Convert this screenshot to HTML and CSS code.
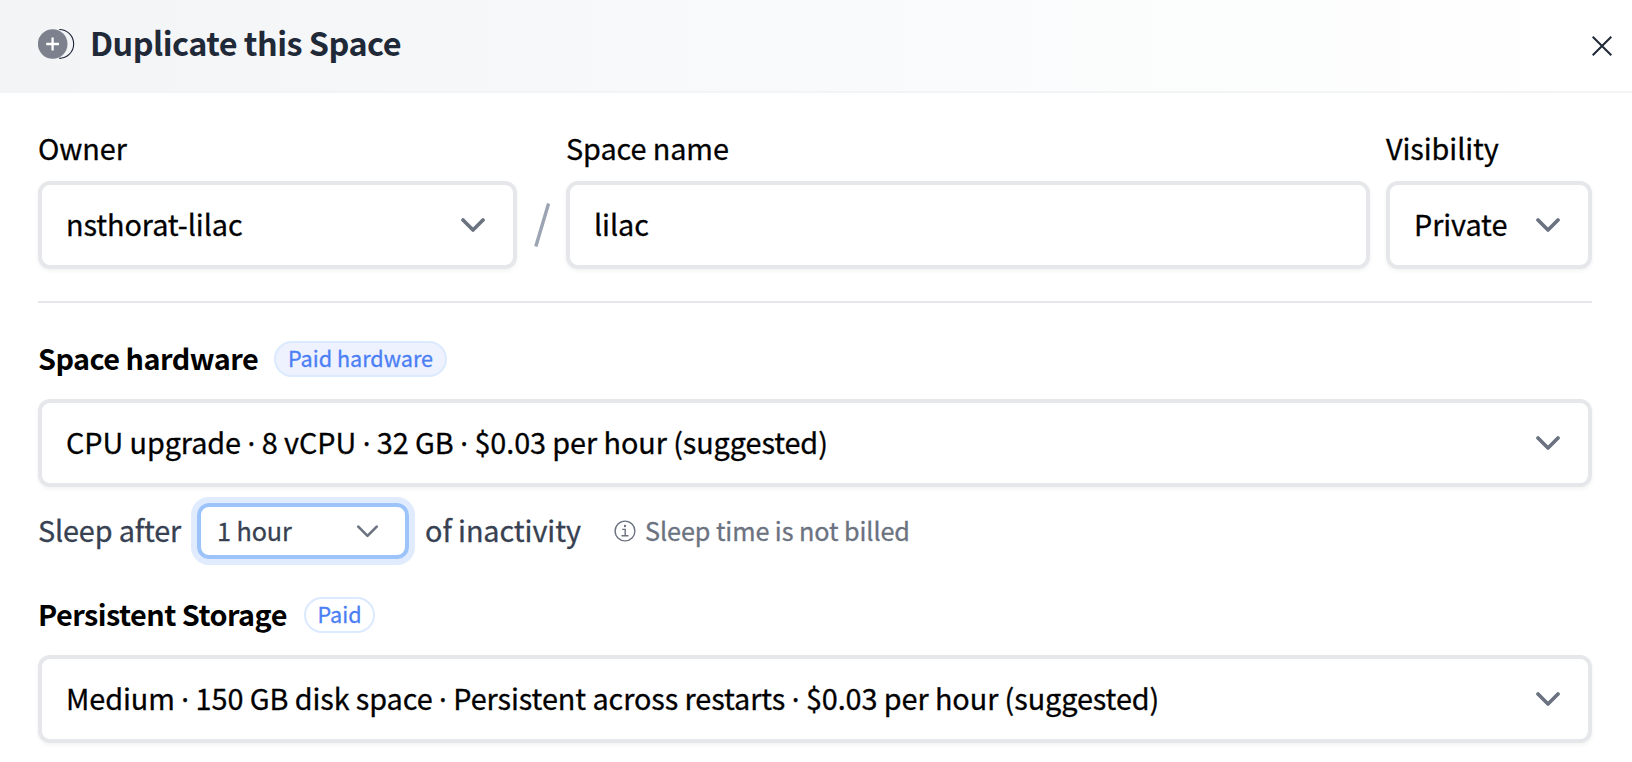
FILE: index.html
```html
<!DOCTYPE html>
<html lang="en">
<head>
<meta charset="utf-8">
<title>Duplicate this Space</title>
<link rel="stylesheet" href="styles.css">
</head>
<body>
<div class="modal">
  <header class="header">
    <svg class="dup-icon" width="37" height="32" viewBox="0 0 37 32">
      <path d="M21.2 1.5a14.3 14.3 0 0 1 0 28.9" fill="none" stroke="#1f2937" stroke-width="1.1"/>
      <circle cx="14.7" cy="16" r="14.8" fill="#7c818d"/>
      <path d="M14.6 9.6v12.8M8.2 16H21" stroke="#fff" stroke-width="2.3"/>
    </svg>
    <h1 class="title">Duplicate this Space</h1>
    <svg class="close" width="20" height="20" viewBox="0 0 20 20"><path d="M.7.7l18.6 18.6M19.3.7L.7 19.3" stroke="#1f2937" stroke-width="2"/></svg>
  </header>
  <main class="content">
    <div class="fields">
      <label class="field owner"><span class="label">Owner</span>
        <span class="box"><span>nsthorat-lilac</span><svg class="chev" width="24" height="14" viewBox="0 0 24 14"><path d="M2 2l10 10L22 2"/></svg></span></label>
      <svg class="slash" width="16" height="44" viewBox="0 0 16 44"><path d="M1.8 43.5L14.6.5" stroke="#9ca3b2" stroke-width="3.4"/></svg>
      <label class="field name"><span class="label">Space name</span>
        <span class="box"><span>lilac</span></span></label>
      <label class="field visibility"><span class="label">Visibility</span>
        <span class="box"><span>Private</span><svg class="chev" width="24" height="14" viewBox="0 0 24 14"><path d="M2 2l10 10L22 2"/></svg></span></label>
    </div>
    <div class="divider"></div>
    <div class="row"><h2 class="heading hardware">Space hardware</h2><span class="pill filled">Paid hardware</span></div>
    <div class="box"><span>CPU upgrade <span class="dot">·</span> 8 vCPU <span class="dot">·</span> 32 GB <span class="dot">·</span> $0.03 per hour (suggested)</span><svg class="chev" width="24" height="14" viewBox="0 0 24 14"><path d="M2 2l10 10L22 2"/></svg></div>
    <div class="sleep">
      <span class="sleep-text before">Sleep after</span>
      <span class="select"><span>1 hour</span><svg class="chev small" width="21" height="13" viewBox="0 0 21 13"><path d="M1.3 1.6l9.2 9.2 9.2-9.2"/></svg></span>
      <span class="sleep-text after">of inactivity</span>
      <svg class="info" width="22" height="22" viewBox="0 0 22 22" fill="none" stroke="#6b7280" stroke-width="1.4"><circle cx="11" cy="11" r="9.9"/><path d="M8.2 9.4h3v6M7.5 15.8h7"/><circle cx="11" cy="6" r="1.2" fill="#6b7280" stroke="none"/></svg>
      <span class="note">Sleep time is not billed</span>
    </div>
    <div class="row"><h2 class="heading storage">Persistent Storage</h2><span class="pill outline">Paid</span></div>
    <div class="box"><span>Medium <span class="dot">·</span> 150 GB disk space <span class="dot">·</span> Persistent across restarts <span class="dot">·</span> $0.03 per hour (suggested)</span><svg class="chev" width="24" height="14" viewBox="0 0 24 14"><path d="M2 2l10 10L22 2"/></svg></div>
  </main>
</div>
</body>
</html>
```
FILE: styles.css
```css
* { box-sizing: border-box; }
body { margin: 0; background: #fff; color: #000; font-family: "Noto Sans CJK SC", "Noto Sans", sans-serif; font-size: 28.8px; line-height: 40px; letter-spacing: -.075px; white-space: nowrap; -webkit-text-stroke: .3px; }
.modal { width: 1632px; height: 762px; overflow: hidden; }
.header { display: flex; align-items: center; height: 93px; padding: 0 20px 3px 38px; border-bottom: 2px solid #f3f4f6; background: linear-gradient(to right, #f3f4f6, #f9fafb 50%, #fff); }
.dup-icon { flex: none; }
.title { margin: 0 0 4px 15px; font-size: 32.4px; font-weight: 700; letter-spacing: -.52px; color: #1f2937; -webkit-text-stroke: 0; }
.close { margin: 3px 0 0 auto; flex: none; }
.content { padding: 32px 40px 0 38px; }
.fields { display: flex; align-items: flex-end; }
.field { display: flex; flex-direction: column; }
.label { line-height: 45px; margin-bottom: 11px; }
.owner { width: 479px; }
.slash { margin: 0 16px 22px 17px; flex: none; }
.name { width: 804px; }
.visibility { width: 206px; margin-left: 16px; }
.box { display: flex; align-items: center; justify-content: space-between; height: 88px; padding: 0 28px 3px 24px; border: 4px solid #e5e7eb; border-radius: 12px; background: #fff; box-shadow: 0 2px 4px rgba(0, 0, 0, .05); }
.dot { display: inline-block; width: 8px; line-height: 1; text-align: center; font-family: "Noto Sans", sans-serif; }
.chev { flex: none; margin-top: 2px; fill: none; stroke: #6b7280; stroke-width: 3.7; stroke-linecap: round; stroke-linejoin: round; }
.small { stroke-width: 2.6; }
.divider { height: 2px; margin: 32px 0 36px; background: #e5e7eb; }
.row { display: flex; align-items: center; height: 40px; margin-bottom: 20px; }
.heading { margin: 0 0 3px; font-size: 28.8px; font-weight: 700; letter-spacing: -.52px; -webkit-text-stroke: 0; }
.hardware { width: 236px; }
.storage { width: 266px; }
.pill { display: flex; align-items: center; justify-content: center; height: 36px; padding-bottom: 3px; border: 2px solid #dbeafe; border-radius: 18px; color: #4b7ff5; font-size: 21.6px; letter-spacing: 0; }
.filled { width: 173px; background: #eef2ff; }
.outline { width: 71px; }
.sleep { display: flex; align-items: center; height: 56px; margin: 16px 0 36px; color: #374151; }
.sleep-text { padding-bottom: 3px; }
.before { width: 159px; letter-spacing: -.15px; }
.select { display: flex; align-items: center; justify-content: space-between; width: 212px; height: 56px; padding: 0 27px 2px 16px; border: 4px solid #9cc4fb; border-radius: 12px; font-size: 25.2px; box-shadow: 0 0 0 6px #e0ebfe; }
.after { width: 189px; margin-left: 16px; }
.info { flex: none; }
.note { margin-left: 9px; padding-bottom: 2px; font-size: 25.2px; color: #6b7280; }
```
